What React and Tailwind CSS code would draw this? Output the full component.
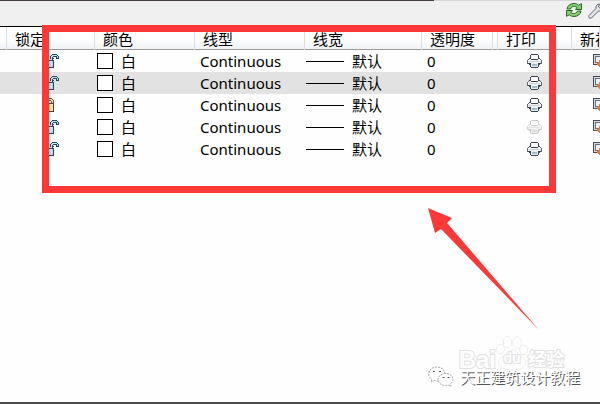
const layers = [
  { name: "layer-1", locked: false, plots: true },
  { name: "layer-2", locked: false, plots: true, selected: true },
  { name: "layer-3", locked: true, plots: true },
  { name: "layer-4", locked: false, plots: false },
  { name: "layer-5", locked: false, plots: true },
];

const columns = [
  { id: "gutter", label: "", width: "w-[7px]" },
  { id: "lock", label: "锁定", width: "w-[88px]" },
  { id: "color", label: "颜色", width: "w-[100px]" },
  { id: "linetype", label: "线型", width: "w-[110px]" },
  { id: "lineweight", label: "线宽", width: "w-[117px]" },
  { id: "transparency", label: "透明度", width: "w-[71px]" },
  { id: "spacer", label: "", width: "w-[5px]" },
  { id: "plot", label: "打印", width: "w-[74px]" },
  { id: "viewport", label: "新视", width: "" },
];

function LockIcon({ locked }) {
  if (locked) {
    return (
      <svg width="16" height="14" viewBox="0 0 16 14" shapeRendering="crispEdges">
        <path d="M2 6V3h1V2h1V1h4v1h1v1h1v3H8V4H7V3H5v1H4v2z" fill="#f3e6ac" />
        <path d="M2 5V2h1V1h1V0h4v1h1v1h1v3H9V2H8V1H4v1H3v3zM4 5V3h1V2h2v1h1v2H7V3H5v2z" fill="#57503c" />
        <path d="M0 5h10v9H0z" fill="#4c4534" />
        <path d="M1 6h8v7H1z" fill="#f3e3a0" />
        <path d="M1 6h8v1H1z" fill="#fbf0bd" />
      </svg>
    );
  }
  return (
    <svg width="16" height="14" viewBox="0 0 16 14" shapeRendering="crispEdges">
      <path d="M6 5V2h1V1h6v1h1v2h-2V3H9v3H6z" fill="#b8edf7" />
      <path d="M6 5V2h1V1h1V0h5v1h1v1h1v3h-3V3H9v1h1v1H9v1H8V3h1V2h4v2h1V2h-1V1H8v1H7v3z" fill="#24435f" />
      <path d="M0 6h10v8H0z" fill="#24435f" />
      <path d="M1 7h8v6H1z" fill="#9fdff0" />
      <path d="M1 7h8v1H1zM7 8h1v4H7z" fill="#bcecf6" />
    </svg>
  );
}

function PrinterIcon({ muted }) {
  const dark = muted ? "#cbcbcb" : "#3b4250";
  const side = muted ? "#d8d8d8" : "#646b7d";
  return (
    <svg width="15" height="14" viewBox="0 0 15 14" shapeRendering="crispEdges">
      <path d="M1 6h13v4H1z" fill={muted ? "#f2f2f2" : "#edf0f3"} />
      <path d="M4 1h7l1 5H3z" fill="#fff" />
      <path d="M4 0h7v1H4zM3 1h1v3H3zM11 1h1v3h-1zM2 4h1v1H2zM12 4h1v1h-1zM4 5h7v1H4zM3 4h1v1H3zM11 4h1v1h-1z" fill={dark} />
      <path d="M1 5h1v1H1zM13 5h1v1h-1zM0 6h1v4H0zM14 6h1v4h-1z" fill={side} />
      <path d="M2 7h11v1H2z" fill={muted ? "#e4e4e4" : "#cdd3dc"} />
      <path d="M1 9h3v1H1zM11 9h3v1h-3zM2 10h2v1H2zM11 10h2v1h-2zM3 11h1v2H3zM11 11h1v2h-1zM4 13h7v1H4z" fill={dark} />
      <path d="M4 9h7v4H4z" fill={muted ? "#ececec" : "#e2f0f3"} />
      <path d="M5 10h5v2H5z" fill={muted ? "#dcdcdc" : "#9dbdc8"} />
    </svg>
  );
}

function ViewportIcon() {
  return (
    <svg width="16" height="15" viewBox="0 0 16 15" shapeRendering="crispEdges">
      <path d="M0 0h14v11H0z" fill="#474c58" />
      <path d="M1 1h12v9H1z" fill="#d5dae1" />
      <path d="M2 2h10v7H2z" fill="#6a707c" />
      <path d="M3 3h8v5H3z" fill="#edf0f4" />
      <path d="M5 8h1v1H5zM6 6h2v7H6zM5 11h1v1H5zM8 7h2v6H8zM4 9h6v2H4z" fill="#ee7a20" />
      <path d="M7 9h2v2H7z" fill="#ffd27a" />
    </svg>
  );
}

function RefreshIcon() {
  return (
    <svg width="16" height="14" viewBox="0 0 16 14">
      <g fill="#8bc97a" stroke="#246b1c" strokeLinejoin="miter">
        <path d="M1 6C1.500 2.500 4.500.5 8 .5c2 0 3.500.7 4.500 1.700L15.500.7v5.800H9.500l1.600-2C9 2.800 5.500 3 4.500 6z" />
        <path d="M15 8c-.5 3.500-3.500 5.500-7 5.500-2 0-3.500-.7-4.500-1.700L.5 13.300V7.500h6l-1.600 2C7 11.200 10.500 11 11.500 8z" />
      </g>
    </svg>
  );
}

function WrenchIcon() {
  return (
    <svg width="16" height="16" viewBox="0 0 16 16">
      <path
        d="M1 12.500 8 5.500C7.500 3 9 1 11.500 1L10.500 4l2 1.500L15 4c.5 3-2 4.500-4.500 4L3.500 15C1.500 16 0 14 1 12.500z"
        fill="#e3e5ea"
        stroke="#5d6370"
      />
    </svg>
  );
}

function HeaderCell({ column }) {
  return (
    <th
      scope="col"
      className={`${column.width} overflow-hidden border-r border-[#dcdfe3] p-0 text-left font-normal whitespace-nowrap`}
    >
      {column.label && <span className="block pl-2">{column.label}</span>}
    </th>
  );
}

function LayerRow({ layer }) {
  return (
    <tr className={`h-[22px] ${layer.selected ? "bg-[#e2e2e2]" : ""}`}>
      <td className="p-0" />
      <td className="p-0">
        <div className="pl-[37px]">
          <LockIcon locked={layer.locked} />
        </div>
      </td>
      <td className="p-0">
        <div className="flex items-center gap-2 pl-0.5">
          <span className="size-4 border border-black bg-white" />
          <span>白</span>
        </div>
      </td>
      <td className="p-0 pl-[5px]">Continuous</td>
      <td className="p-0">
        <div className="flex items-center gap-2 pl-px">
          <span className="w-[38px] border-t border-black" />
          <span>默认</span>
        </div>
      </td>
      <td className="p-0 pl-[5px]">0</td>
      <td className="p-0" />
      <td className="p-0">
        <div className="pl-[29px]">
          <PrinterIcon muted={!layer.plots} />
        </div>
      </td>
      <td className="p-0">
        <div className="overflow-hidden pl-[21px]">
          <ViewportIcon />
        </div>
      </td>
    </tr>
  );
}

function BaiduMark() {
  return (
    <div className="absolute right-9 bottom-[34px] flex items-end font-['Liberation_Sans','Noto_Sans_CJK_SC',sans-serif] font-bold text-[#fefefe] [-webkit-text-stroke:2px_#e2e2e2] [paint-order:stroke_fill]">
      <span className="text-2xl leading-5">Bai</span>
      <span className="relative flex h-[34px] w-8 items-end justify-center">
        <svg className="absolute inset-0" width="32" height="34" viewBox="0 0 32 34" fill="#fefefe" stroke="#dedede">
          <ellipse cx="4.500" cy="13" rx="3.500" ry="4.500" />
          <ellipse cx="11.500" cy="6" rx="4" ry="5.500" />
          <ellipse cx="21" cy="6.500" rx="4" ry="5.500" />
          <ellipse cx="27.500" cy="14" rx="3.500" ry="4.500" />
          <path d="M16 14c-4 0-5 4-8 6s-6 4-5 8c2 6 7 5 13 5s11 1 13-5c1-4-2-5-5-8s-4-6-8-6z" />
        </svg>
        <span className="relative pb-1 text-sm leading-4">du</span>
      </span>
      <span className="text-lg leading-5">经验</span>
    </div>
  );
}

function WeChatIcon() {
  return (
    <svg width="26" height="22" viewBox="0 0 26 22" fill="#fff" stroke="#a8a8a8" strokeDasharray="2 1">
      <path d="M9 1C4 1 .7 4 .7 8c0 2 1 4 3 5.500L3 16l3-1.500c6 1.500 11-1.500 11-6.500 0-4-3.500-7-8-7z" />
      <path d="M17.500 7.500c-4.500 0-7.500 3-7.500 6s3 6 7.500 6l3-.5 2.500 1.500-.5-2.500c5-4 2-10.500-5-10.500z" />
      <path d="M5 5.500h2M11 5.500h2M14.500 11.500h2M19.500 11.500h2" stroke="#555" strokeDasharray="none" />
    </svg>
  );
}

export default function App() {
  return (
    <main className="relative flex min-h-screen flex-col overflow-hidden bg-[#fefefe] font-['Noto_Sans','Noto_Sans_CJK_SC',sans-serif] text-[15px] leading-5 text-black">
      <div className="flex h-px">
        <span className="w-[434px] bg-[#413b40]" />
        <span className="flex-1 bg-[#d3d7d7]" />
      </div>
      <header className="flex h-[26px] items-start justify-end gap-1 overflow-hidden border-b border-black bg-[#f0f0f0] pt-0.5">
        <button type="button" aria-label="刷新" className="w-[18px]">
          <RefreshIcon />
        </button>
        <button type="button" aria-label="设置" className="-mr-1 w-4">
          <WrenchIcon />
        </button>
      </header>

      <table className="w-full table-fixed border-separate border-spacing-0">
        <thead>
          <tr className="h-[23px] bg-linear-to-b from-white from-50% to-[#eff1f3] shadow-[inset_0_-1px_0_#9b9b9b]">
            {columns.map((column) => (
              <HeaderCell key={column.id} column={column} />
            ))}
          </tr>
        </thead>
        <tbody>
          {layers.map((layer) => (
            <LayerRow key={layer.name} layer={layer} />
          ))}
        </tbody>
      </table>

      <footer className="mt-auto h-0.5 bg-[#4b4b4b]" />

      <BaiduMark />
      <div className="absolute right-5 bottom-4 flex items-center gap-1.5 text-white [text-shadow:1px_1px_0_#555]">
        <WeChatIcon />
        <span>天正建筑设计教程</span>
      </div>

      {/* highlight frame and pointer */}
      <div className="absolute top-[25px] left-[42px] h-[168px] w-[514px] border-[7px] border-[#fc3838]" />
      <svg className="absolute top-[208px] left-[428px]" width="112" height="123" viewBox="0 0 112 123">
        <path d="M0 0 24 10 19 15 111 122 13 21 7 25z" fill="#fc3838" />
      </svg>
    </main>
  );
}
